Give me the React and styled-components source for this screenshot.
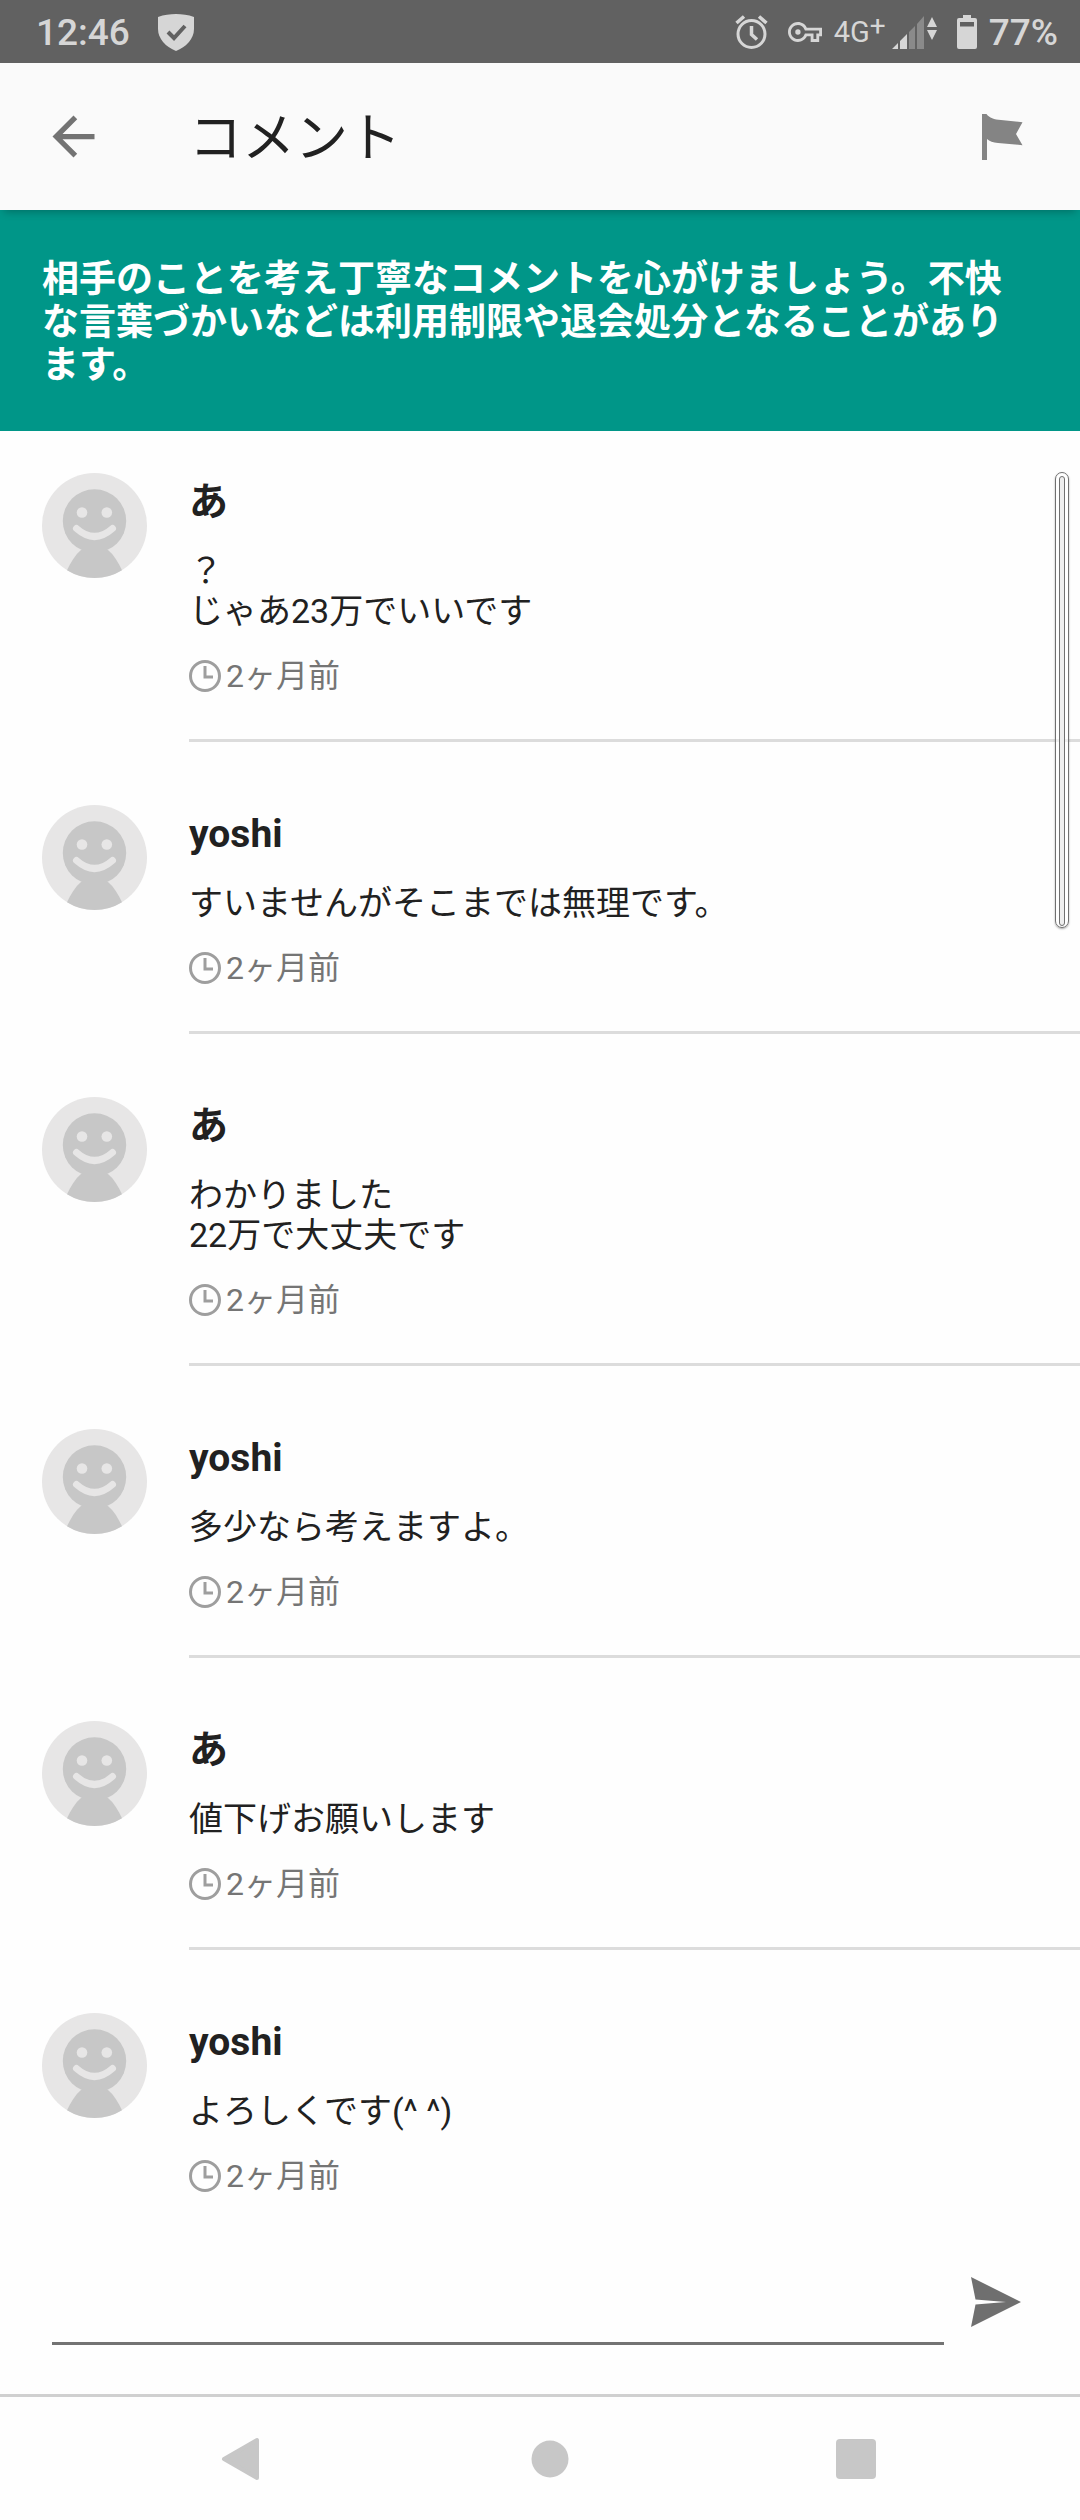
import React, { useState } from 'react';
import styled, { createGlobalStyle, css } from 'styled-components';

const comments = [
    { id: 1, name: 'あ', text: '？\nじゃあ23万でいいです', time: '2ヶ月前' },
    { id: 2, name: 'yoshi', text: 'すいませんがそこまでは無理です。', time: '2ヶ月前' },
    { id: 3, name: 'あ', text: 'わかりました\n22万で大丈夫です', time: '2ヶ月前' },
    { id: 4, name: 'yoshi', text: '多少なら考えますよ。', time: '2ヶ月前' },
    { id: 5, name: 'あ', text: '値下げお願いします', time: '2ヶ月前' },
    { id: 6, name: 'yoshi', text: 'よろしくです(^ ^)', time: '2ヶ月前' },
];

/* ========= ICONS ========= */

const ShieldIcon = () => (
    <svg width="36" height="37" viewBox="0 0 36 37" aria-hidden="true">
        <path fill="#d6d6d6" d="M0 3C6 .8 12 0 18 0s12 .8 18 3v12c0 10-8 18-18 22C8 33 0 25 0 15z" />
        <path fill="none" stroke="#616161" strokeWidth="4" d="M10 18l6 6 11-12" />
    </svg>
);

const AlarmIcon = () => (
    <svg width="33" height="34" viewBox="0 0 33 34" fill="none" stroke="#d6d6d6" aria-hidden="true">
        <circle cx="16.500" cy="19" r="13.500" strokeWidth="3" />
        <path strokeWidth="3.500" d="M1.500 8l7.500-6.500M31.500 8L24 1.500M16.500 11v8.500l5.500 5" />
    </svg>
);

const KeyIcon = () => (
    <svg width="34" height="20" viewBox="0 5 24 14" fill="#d6d6d6" aria-hidden="true">
        <path d="M22 19h-6v-4h-2.680c-1.140 2.420-3.600 4-6.320 4-3.860 0-7-3.140-7-7s3.140-7 7-7c2.720 0 5.170 1.580 6.320 4H24v6h-2v4zm-4-2h2v-4h2v-2H11.940l-.230-.670C11.010 8.340 9.110 7 7 7c-2.760 0-5 2.240-5 5s2.240 5 5 5c2.110 0 4.010-1.340 4.710-3.330l.230-.670H18v4z" />
        <circle cx="7" cy="12" r="1.900" />
    </svg>
);

const SignalIcon = () => (
    <svg width="45" height="33" viewBox="0 0 45 33" fill="#d6d6d6" aria-hidden="true">
        <path d="M0 33l6-6v6zM8 33v-8l7-7v15z" />
        <path fill="#8a8a8a" d="M17 33V16l6-6v23zM25 33V8l7-8v33z" />
        <path d="M35 11l5-10 5 10zM35 14h10l-5 10z" />
    </svg>
);

const BatteryIcon = () => (
    <svg width="20" height="34" viewBox="0 0 20 34" aria-hidden="true">
        <path
            fill="#d6d6d6"
            fillRule="evenodd"
            d="M6 0h8v3h4a2 2 0 012 2v27a2 2 0 01-2 2H2a2 2 0 01-2-2V5a2 2 0 012-2h4zM3 7v4.500h14V7z"
        />
    </svg>
);

const BackIcon = () => (
    <svg width="63" height="63" viewBox="0 0 24 24" fill="#737373" aria-hidden="true">
        <path d="M20 11H7.830l5.590-5.590L12 4l-8 8 8 8 1.410-1.410L7.830 13H20v-2z" />
    </svg>
);

const FlagIcon = () => (
    <svg width="41" height="46" viewBox="0 0 41 46" fill="#848484" aria-hidden="true">
        <path d="M0 0h4.500C7.500 4 12 5.600 19 6l21.500 2.300-6.500 11.700 6.500 11.200L16 29c-5-.4-8.500-1.800-11-4v21H0z" />
    </svg>
);

const AvatarIcon = () => (
    <svg width="105" height="105" viewBox="0 0 105 105" aria-hidden="true">
        <circle cx="52.500" cy="52.500" r="52.500" fill="#e7e6e6" />
        <circle cx="52.500" cy="48" r="31.700" fill="#c7c7c7" />
        <path fill="#c7c7c7" d="M39 77h27c6 5 10 12 14 20.200a52.500 52.500 0 01-55 0C29 89 33 82 39 77z" />
        <circle cx="40" cy="39.500" r="5.300" fill="#e7e6e6" />
        <circle cx="64.800" cy="39.500" r="5.300" fill="#e7e6e6" />
        <path d="M34.500 55.500q18 16 36 0" fill="none" stroke="#e7e6e6" strokeWidth="7" strokeLinecap="round" />
    </svg>
);

const ClockIcon = () => (
    <svg width="32" height="32" viewBox="0 0 32 32" fill="none" stroke="#9e9e9e" strokeWidth="3" aria-hidden="true">
        <circle cx="16" cy="16" r="14.500" />
        <path d="M16 6v11h8" />
    </svg>
);

const SendIcon = () => (
    <svg width="50" height="50" viewBox="0 0 50 50" fill="#6f6f6f" aria-hidden="true">
        <path d="M0 0l50 25L0 50l4.500-22.500L35 25 4.500 22.500z" />
    </svg>
);

const navItems = [
    { label: '戻る', shape: <path strokeLinejoin="round" stroke="#c7c7c7" strokeWidth="4" d="M4 22l33-19v38z" /> },
    { label: 'ホーム', shape: <circle cx="22" cy="22" r="18.500" /> },
    { label: '最近使ったアプリ', shape: <rect y="2" width="40" height="40" rx="4" /> },
];

const Comment = ({ name, text, time }) => (
    <CommentItem>
        <AvatarIcon />
        <CommentBody>
            <CommentName>{name}</CommentName>
            <CommentText>{text}</CommentText>
            <CommentTime>
                <ClockIcon />
                <span>{time}</span>
            </CommentTime>
        </CommentBody>
    </CommentItem>
);

const App = () => {
    const [message, setMessage] = useState('');

    return (
        <Screen>
            <GlobalStyle />

            <StatusBar>
                <StatusGroup $gap={28}>
                    <StatusText>12:46</StatusText>
                    <ShieldIcon />
                </StatusGroup>
                <StatusGroup $gap={20}>
                    <AlarmIcon />
                    <StatusGroup $gap={12}>
                        <KeyIcon />
                        <StatusGroup $gap={6}>
                            <NetworkText>4G<sup>+</sup></NetworkText>
                            <SignalIcon />
                        </StatusGroup>
                    </StatusGroup>
                    <StatusGroup $gap={12}>
                        <BatteryIcon />
                        <StatusText>77%</StatusText>
                    </StatusGroup>
                </StatusGroup>
            </StatusBar>

            <AppBar>
                <IconButton type="button" aria-label="戻る"><BackIcon /></IconButton>
                <Title>コメント</Title>
                <IconButton type="button" aria-label="報告する"><FlagIcon /></IconButton>
            </AppBar>

            <Notice>
                相手のことを考え丁寧なコメントを心がけましょう。不快な言葉づかいなどは利用制限や退会処分となることがあります。
            </Notice>

            <ListArea>
                <CommentList>
                    {comments.map((comment) => (
                        <Comment key={comment.id} {...comment} />
                    ))}
                </CommentList>
                <ScrollThumb />
            </ListArea>

            <Composer onSubmit={(e) => e.preventDefault()}>
                <MessageInput
                    aria-label="コメントを入力"
                    value={message}
                    onChange={(e) => setMessage(e.target.value)}
                />
                <SendButton type="submit" aria-label="送信"><SendIcon /></SendButton>
            </Composer>

            <NavBar>
                {navItems.map(({ label, shape }) => (
                    <IconButton key={label} type="button" aria-label={label}>
                        <svg width="44" height="44" viewBox="0 0 44 44" fill="#c7c7c7" aria-hidden="true">
                            {shape}
                        </svg>
                    </IconButton>
                ))}
            </NavBar>
        </Screen>
    );
};

export default App;

/* ========= CSS STYLED COMPONENTS ========= */

const GlobalStyle = createGlobalStyle`
    * {
        box-sizing: border-box;
    }

    body {
        margin: 0;
        background: #fefefe;
        color: #212121;
        font-family: Roboto, "Noto Sans CJK JP", sans-serif;
    }

    svg {
        display: block;
        flex-shrink: 0;
    }
`;

const Screen = styled.div`
    display: flex;
    flex-direction: column;
    min-height: 100vh;
`;

const StatusBar = styled.div`
    display: flex;
    align-items: center;
    justify-content: space-between;
    height: 63px;
    padding: 1px 22px 0 36px;
    background: #616161;
    color: #d6d6d6;
`;

const StatusGroup = styled.div`
    display: flex;
    align-items: center;
    gap: ${({ $gap }) => $gap}px;
`;

const StatusText = styled.span`
    padding-top: 2px;
    font-size: 37px;
    font-weight: 500;
    line-height: 44px;
`;

const NetworkText = styled.span`
    font-size: 29px;
    line-height: 44px;

    > sup {
        font-size: 28px;
        line-height: 0;
        vertical-align: 7px;
    }
`;

const buttonReset = css`
    display: flex;
    align-items: center;
    justify-content: center;
    padding: 0;
    border: 0;
    background: none;
    cursor: pointer;
`;

const IconButton = styled.button`
    ${buttonReset}
`;

const AppBar = styled.header`
    position: relative;
    z-index: 1;
    display: flex;
    align-items: center;
    height: 147px;
    padding: 0 57px 0 42px;
    background: #fafafa;
    box-shadow: 0 6px 8px -4px rgba(0, 0, 0, 0.25);
`;

const Title = styled.h1`
    flex: 1;
    margin: 0 0 0 84px;
    padding-top: 4px;
    font-size: 53px;
    font-weight: 400;
    line-height: 60px;
`;

const Notice = styled.p`
    margin: 0;
    padding: 48px 42px 44px;
    background: #009688;
    color: #fff;
    font-size: 37px;
    font-weight: 700;
    line-height: 43px;
`;

const ListArea = styled.main`
    position: relative;
    flex: 1;
    padding-top: 42px;
`;

const CommentList = styled.ul`
    display: flex;
    flex-direction: column;
    gap: 63px;
    margin: 0;
    padding: 0 0 0 42px;
    list-style: none;
`;

const CommentBody = styled.div`
    flex: 1;
    padding: 6px 0 45px;
    border-bottom: 3px solid #dcdcdc;
`;

const CommentItem = styled.li`
    display: flex;
    align-items: flex-start;
    gap: 42px;

    &:last-child ${CommentBody} {
        border-bottom: 0;
    }
`;

const CommentName = styled.h2`
    margin: 0 0 26px;
    font-size: 39px;
    font-weight: 700;
    line-height: 46px;
`;

const CommentText = styled.p`
    margin: 0 0 27px;
    font-size: 34px;
    line-height: 40px;
    white-space: pre-line;
`;

const CommentTime = styled.div`
    display: flex;
    align-items: center;
    gap: 5px;
    color: #757575;
    font-size: 32px;
    line-height: 36px;
`;

const ScrollThumb = styled.div`
    position: absolute;
    top: 41px;
    right: 11px;
    width: 14px;
    height: 456px;
    padding: 3px;
    border: 1px solid #707070;
    border-radius: 7px;
    background: rgba(255, 255, 255, 0.6);
    box-shadow: 0 1px 2px rgba(0, 0, 0, 0.35);

    &::after {
        content: "";
        display: block;
        height: 100%;
        border: 1px solid #707070;
        border-radius: 3px;
        background: #eee;
    }
`;

const Composer = styled.form`
    display: flex;
    align-items: flex-end;
    padding: 0 32px 49px 52px;
`;

const MessageInput = styled.input`
    flex: 1;
    min-width: 0;
    height: 86px;
    padding: 0;
    border: 0;
    border-bottom: 3px solid #737373;
    outline: none;
    background: none;
    color: inherit;
    font-family: inherit;
    font-size: 39px;
`;

const SendButton = styled.button`
    ${buttonReset}
    padding: 18px 27px;
`;

const NavBar = styled.nav`
    display: grid;
    grid-template-columns: repeat(3, 1fr);
    height: 126px;
    padding: 0 68px 0 88px;
    border-top: 3px solid #d0d0d0;
`;
